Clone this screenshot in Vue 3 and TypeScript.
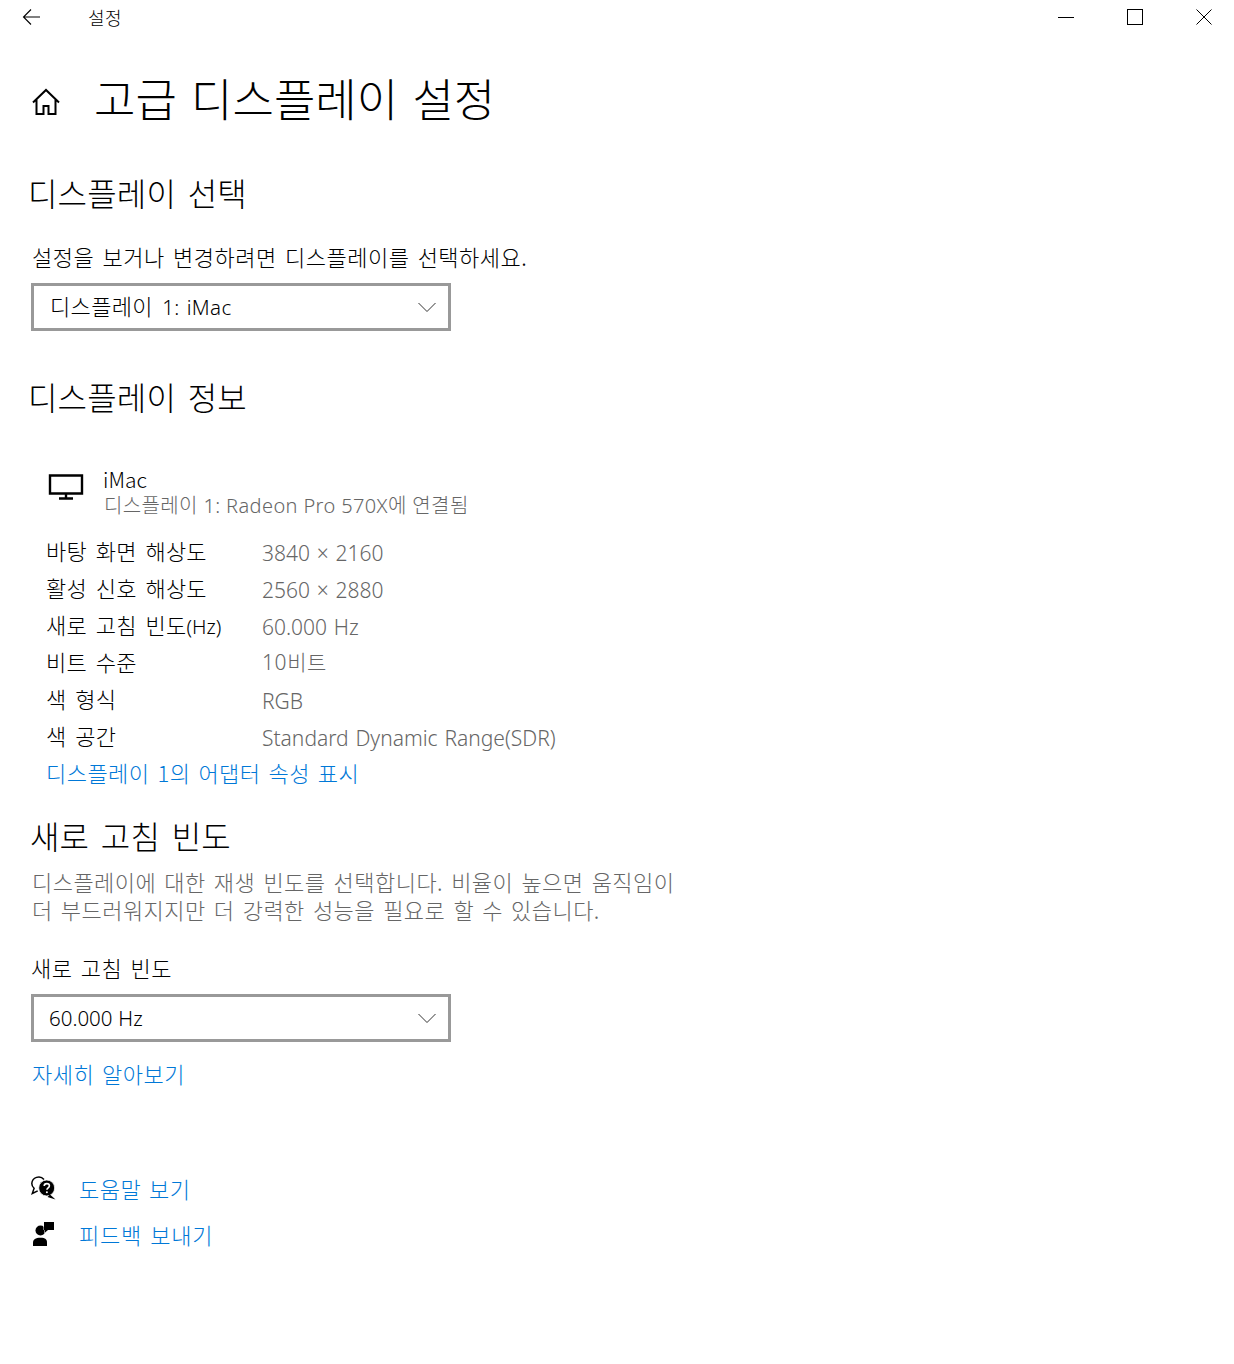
<script setup lang="ts">
const infoRows: { label: string; suffix?: string; value: string; hangul?: boolean }[] = [
  { label: '바탕 화면 해상도', value: '3840 × 2160' },
  { label: '활성 신호 해상도', value: '2560 × 2880' },
  { label: '새로 고침 빈도', suffix: '(Hz)', value: '60.000 Hz' },
  { label: '비트 수준', value: '10비트', hangul: true },
  { label: '색 형식', value: 'RGB' },
  { label: '색 공간', value: 'Standard Dynamic Range(SDR)' },
]
</script>

<template>
  <div class="page">
    <header class="titlebar">
      <svg class="back" width="20" height="18" viewBox="0 0 20 18"><path d="M18 9H1.500M9 1.500 1.500 9 9 16.500" fill="none" stroke="#000" stroke-width="1.100" /></svg>
      <span class="app-name">설정</span>
      <div class="win-buttons">
        <svg width="16" height="16" viewBox="0 0 16 16"><path d="M0 8.500h16" stroke="#000" stroke-width="1" /></svg>
        <svg width="16" height="16" viewBox="0 0 16 16"><rect x=".5" y=".5" width="15" height="15" fill="none" stroke="#000" stroke-width="1" /></svg>
        <svg width="16" height="16" viewBox="0 0 16 16"><path d="M.5.5l15 15M15.500.5l-15 15" stroke="#000" stroke-width="1" fill="none" /></svg>
      </div>
    </header>

    <main class="content">
      <div class="page-title">
        <svg class="home" width="30" height="28" viewBox="0 0 30 28"><path d="M2 14.500 15 2l13 12.500M5.500 11.500V26h7v-8h5v8h7V11.500" fill="none" stroke="#000" stroke-width="2" /></svg>
        <h1>고급 디스플레이 설정</h1>
      </div>

      <h2 class="h-select">디스플레이 선택</h2>
      <p class="prompt">설정을 보거나 변경하려면 디스플레이를 선택하세요.</p>
      <div class="select">
        <span class="first-value"><span class="ko">디스플레이</span> 1: iMac</span>
        <svg width="18" height="11" viewBox="0 0 18 11"><path d="M.5 1 9 9.500 17.500 1" fill="none" stroke="#333" stroke-width="1" /></svg>
      </div>

      <h2 class="h-info">디스플레이 정보</h2>
      <div class="monitor">
        <svg width="36" height="26" viewBox="0 0 36 26"><path d="M2 1.500h32v18H2zM18 20v4M11 24.500h14" fill="none" stroke="#000" stroke-width="2.400" /></svg>
        <div class="monitor-text">
          <div class="monitor-name">iMac</div>
          <div class="monitor-sub">디스플레이 1: Radeon Pro 570X에 연결됨</div>
        </div>
      </div>
      <dl class="rows">
        <div v-for="row in infoRows" :key="row.label" class="row">
          <dt>{{ row.label }}<span v-if="row.suffix" class="suffix">{{ row.suffix }}</span></dt>
          <dd :class="{ 'hangul-value': row.hangul }">{{ row.value }}</dd>
        </div>
      </dl>
      <a class="link adapter">디스플레이 1의 어댑터 속성 표시</a>

      <h2 class="h-refresh">새로 고침 빈도</h2>
      <p class="desc">디스플레이에 대한 재생 빈도를 선택합니다. 비율이 높으면 움직임이<br />더 부드러워지지만 더 강력한 성능을 필요로 할 수 있습니다.</p>
      <p class="prompt refresh-label">새로 고침 빈도</p>
      <div class="select">
        <span>60.000 Hz</span>
        <svg width="18" height="11" viewBox="0 0 18 11"><path d="M.5 1 9 9.500 17.500 1" fill="none" stroke="#333" stroke-width="1" /></svg>
      </div>
      <a class="link more">자세히 알아보기</a>

      <div class="help">
        <div class="help-row">
          <svg class="help-icon" width="26" height="26" viewBox="0 0 26 26">
            <path d="M13 4.500A6.900 6.900 0 0 0 .8 8.500c0 2 .9 3.600 2.300 4.800L1.300 18.500l5.400-2.700" fill="none" stroke="#000" stroke-width="1.500" />
            <circle cx="15.700" cy="13" r="8" fill="#000" stroke="#fff" stroke-width=".8" />
            <path d="M19 19.500l5.500 5-8-2.500z" fill="#000" />
            <path d="M13.200 11c0-1.500 1.100-2.400 2.600-2.400s2.600.9 2.600 2.200c0 2.100-2.500 2-2.500 4" fill="none" stroke="#fff" stroke-width="1.600" />
            <circle cx="15.900" cy="17.300" r="1" fill="#fff" />
          </svg>
          <a class="link">도움말 보기</a>
        </div>
        <div class="help-row">
          <svg width="26" height="26" viewBox="0 0 26 26">
            <circle cx="8.500" cy="9.500" r="5" fill="#000" />
            <path d="M1 25v-3.500C1 18.500 3.500 16.800 8.500 16.800s6.500 1.700 6.500 4.700V25z" fill="#000" />
            <path d="M12 1h10v8h-6l-3.500 3V9H12z" fill="#000" stroke="#fff" stroke-width="1" paint-order="stroke" />
          </svg>
          <a class="link feedback">피드백 보내기</a>
        </div>
      </div>
    </main>
  </div>
</template>

<style>
html, body { margin: 0; background: #fff; }
</style>

<style scoped>
.page {
  width: 1234px;
  height: 1364px;
  background: #fff;
  color: #000;
  font-family: "Noto Sans CJK KR", "Noto Sans", sans-serif;
  font-weight: 300;
  overflow: hidden;
}
.titlebar {
  display: flex;
  align-items: center;
  height: 34px;
  padding: 0 22px;
}
.back { margin-right: 46px; }
.app-name { font-size: 18px; line-height: 34px; letter-spacing: .5px; }
.win-buttons { display: flex; gap: 53px; margin-left: auto; }
.content { padding: 0 32px; }
.page-title { display: flex; align-items: center; gap: 33px; height: 126px; margin-left: -1px; }
.home { width: 30px; flex: none; margin-top: 10px; }
h1 { margin: 0; font-size: 45px; font-weight: 300; letter-spacing: 0; word-spacing: 4.350px; line-height: 1; }
h2 { margin: 0; font-size: 32px; font-weight: 300; line-height: 40px; letter-spacing: .16px; word-spacing: 4.400px; }
.h-select { margin: 12px 0 0 -4px; }
p { margin: 0; }
.prompt { font-size: 22px; line-height: 30px; margin-top: 29px; letter-spacing: .5px; word-spacing: 2.900px; }
.select {
  box-sizing: border-box;
  width: 420px;
  height: 48px;
  border: 3px solid #999;
  margin-top: 12px;
  margin-left: -1px;
  padding: 0 12px 0 15px;
  display: flex;
  align-items: center;
  justify-content: space-between;
  font-size: 20.500px;
  word-spacing: .5px;
  font-family: "Noto Sans", "Noto Sans CJK KR", sans-serif;
}
.first-value { letter-spacing: .35px; word-spacing: 1.500px; margin-left: 1px; padding-bottom: 4px; }
.ko { font-size: 22px; letter-spacing: .35px; margin-right: 2px; }
.h-info { margin: 45px 0 0 -4px; }
.monitor { display: flex; gap: 19px; margin: 50px 0 0 16px; align-items: flex-start; }
.monitor svg { margin-top: 8px; }
.monitor-name { font-size: 21px; line-height: 27px; }
.monitor-sub { font-size: 20px; line-height: 26px; color: #666; font-family: "Noto Sans", "Noto Sans CJK KR", sans-serif; letter-spacing: .38px; margin-left: 1px; }
.rows { margin: 14px 0 0 14px; }
.row { display: flex; height: 37px; align-items: center; font-size: 22px; }
dt { width: 216px; box-sizing: border-box; padding-bottom: 4px; letter-spacing: .2px; word-spacing: 3.800px; }
.suffix { font-size: 20px; letter-spacing: 0; font-family: "Noto Sans", sans-serif; }
dd { margin: 0; padding-top: 2px; color: #666; font-size: 21px; font-family: "Noto Sans", "Noto Sans CJK KR", sans-serif; word-spacing: 1.300px; }
dd.hangul-value { padding-top: 0; padding-bottom: 3px; letter-spacing: .6px; }
.link { color: #0078d7; font-size: 22px; letter-spacing: .45px; word-spacing: 2.700px; }
.adapter { display: block; margin: -1px 0 0 14px; line-height: 37px; }
.h-refresh { margin: 24px 0 0 -2px; line-height: 40px; }
.desc { color: #666; font-size: 22px; line-height: 28px; margin-top: 12px; letter-spacing: .45px; word-spacing: 2.850px; }
.refresh-label { margin-top: 29px; margin-left: -1px; }
.more { display: block; margin-top: 14px; line-height: 34px; }
.help { margin-top: 82px; display: flex; flex-direction: column; gap: 14px; }
.help-row { display: flex; align-items: center; gap: 21px; height: 32px; }
.help-icon { margin-left: -1px; margin-right: 1px; }
.feedback { letter-spacing: .75px; }
</style>
